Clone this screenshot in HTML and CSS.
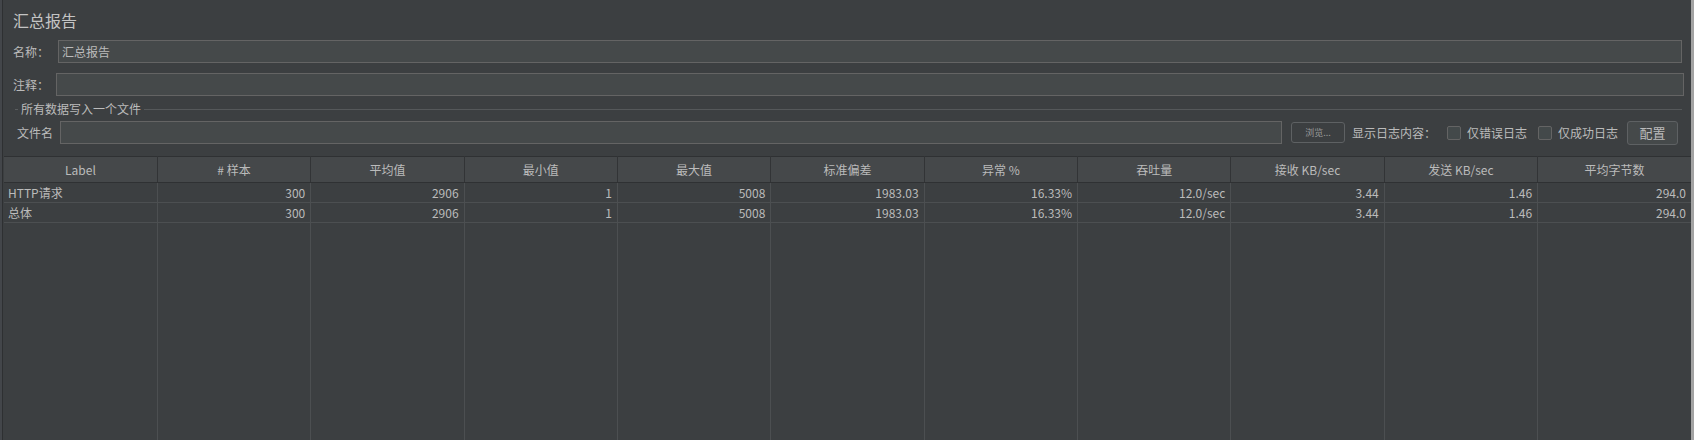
FILE: index.html
```html
<!DOCTYPE html>
<html lang="zh">
<head>
<meta charset="utf-8">
<title>汇总报告</title>
<link rel="stylesheet" href="styles.css">
</head>
<body>
<div class="frame">
  <div class="panel">
    <div class="title">汇总报告</div>
    <div class="row row-name">
      <span class="lbl">名称：</span>
      <div class="field">汇总报告</div>
    </div>
    <div class="row row-comment">
      <span class="lbl">注释：</span>
      <div class="field"></div>
    </div>
    <div class="group">
      <span class="dash"></span>
      <span class="group-title">所有数据写入一个文件</span>
      <span class="group-line"></span>
    </div>
    <div class="row row-file">
      <span class="lbl">文件名</span>
      <div class="field"></div>
      <button class="btn btn-browse">浏览...</button>
      <span class="txt txt-log">显示日志内容：</span>
      <span class="check"></span><span class="txt">仅错误日志</span>
      <span class="check"></span><span class="txt">仅成功日志</span>
      <button class="btn btn-config">配置</button>
    </div>
  </div>
  <div class="table-wrap">
    <table class="grid">
      <thead>
        <tr>
          <th>Label</th><th># 样本</th><th>平均值</th><th>最小值</th><th>最大值</th><th>标准偏差</th><th>异常 %</th><th>吞吐量</th><th>接收 KB/sec</th><th>发送 KB/sec</th><th>平均字节数</th>
        </tr>
      </thead>
      <tbody>
        <tr class="data">
          <td class="l">HTTP请求</td><td>300</td><td>2906</td><td>1</td><td>5008</td><td>1983.03</td><td>16.33%</td><td>12.0/sec</td><td>3.44</td><td>1.46</td><td>294.0</td>
        </tr>
        <tr class="data">
          <td class="l">总体</td><td>300</td><td>2906</td><td>1</td><td>5008</td><td>1983.03</td><td>16.33%</td><td>12.0/sec</td><td>3.44</td><td>1.46</td><td>294.0</td>
        </tr>
        <tr class="filler">
          <td></td><td></td><td></td><td></td><td></td><td></td><td></td><td></td><td></td><td></td><td></td>
        </tr>
      </tbody>
    </table>
  </div>
</div>
</body>
</html>
```

FILE: styles.css
```css
* { box-sizing: border-box; }
html, body {
  margin: 0;
  padding: 0;
  height: 440px;
  overflow: hidden;
  background: #43464a;
}
body {
  font-family: "Noto Sans CJK SC", "Noto Sans", "Liberation Sans", sans-serif;
  font-size: 12px;
  color: #bbbbbb;
}
.frame {
  margin-left: 2px;
  height: 440px;
  display: flex;
  flex-direction: column;
  background: #3c3f41;
  border-left: 1px solid #2e3032;
  border-right: 3px solid #a3a3a3;
}
.panel {
  padding: 9px 0 0 0;
}
.title {
  font-size: 16px;
  line-height: 22px;
  height: 22px;
  padding-left: 10px;
  color: #c4c4c4;
}
.row {
  display: flex;
  align-items: center;
  height: 23px;
}
.lbl {
  white-space: nowrap;
  line-height: 23px;
}
.field {
  flex: 1;
  height: 23px;
  background: #45494a;
  border: 1px solid #646464;
  line-height: 21px;
  padding-left: 3px;
  color: #bbbbbb;
}
.row-name { margin-top: 9px; padding-left: 10px; padding-right: 9px; }
.row-name .lbl { width: 45px; }
.row-comment { margin-top: 10px; padding-left: 10px; padding-right: 7px; }
.row-comment .lbl { width: 43px; }
.group {
  display: flex;
  align-items: center;
  height: 14px;
  margin-top: 6px;
  padding-left: 12px;
  padding-right: 9px;
}
.dash { width: 3px; height: 1px; background: #5a5d5f; }
.group-title { padding: 0 3px 0 3px; line-height: 14px; }
.group-line { flex: 1; height: 1px; background: #55585a; }
.row-file { margin-top: 5px; padding-left: 14px; padding-right: 13px; }
.row-file .lbl { width: 43px; }
.row-file .field { flex: 1; }
.btn {
  font-family: inherit;
  color: #bbbbbb;
  background: #3c3f41;
  border: 1px solid #5e6163;
  border-radius: 3px;
  padding: 0;
  cursor: default;
}
.btn-browse {
  margin-left: 9px;
  width: 54px;
  height: 21px;
  font-size: 9px;
  color: #9a9a9a;
}
.txt { white-space: nowrap; line-height: 23px; }
.txt-log { margin-left: 7px; width: 80px; overflow: visible; }
.check {
  flex: none;
  width: 14px;
  height: 14px;
  border: 1px solid #646464;
  background: #43494a;
  border-radius: 2px;
  margin-left: 15px;
  margin-right: 6px;
}
.check + .txt + .check { margin-left: 11px; }
.btn-config {
  margin-left: 9px;
  width: 51px;
  height: 24px;
  font-size: 13px;
  background: #45494a;
  border-color: #5e6163;
}
.table-wrap {
  flex: 1;
  margin-top: 12px;
  margin-left: 1px;
  display: flex;
}
.grid {
  width: 100%;
  height: 100%;
  border-collapse: collapse;
  table-layout: fixed;
  border-top: 1px solid #2f3133;
}
.grid th {
  height: 26px;
  background: #45484a;
  font-weight: normal;
  color: #bbbbbb;
  text-align: center;
  border-right: 1px solid #323436;
  border-bottom: 1px solid #2f3133;
  padding: 0;
  font-size: 12px;
}
.grid td {
  border-right: 1px solid #4c4f51;
  padding: 0 5px 0 4px;
  text-align: right;
  white-space: nowrap;
  overflow: hidden;
}
.grid th:last-child, .grid td:last-child { border-right: none; }
.grid tr.data td {
  height: 20px;
  border-bottom: 1px solid #4c4f51;
  line-height: 19px;
}
.grid td.l { text-align: left; }
.grid tr.filler td { height: auto; }
```
